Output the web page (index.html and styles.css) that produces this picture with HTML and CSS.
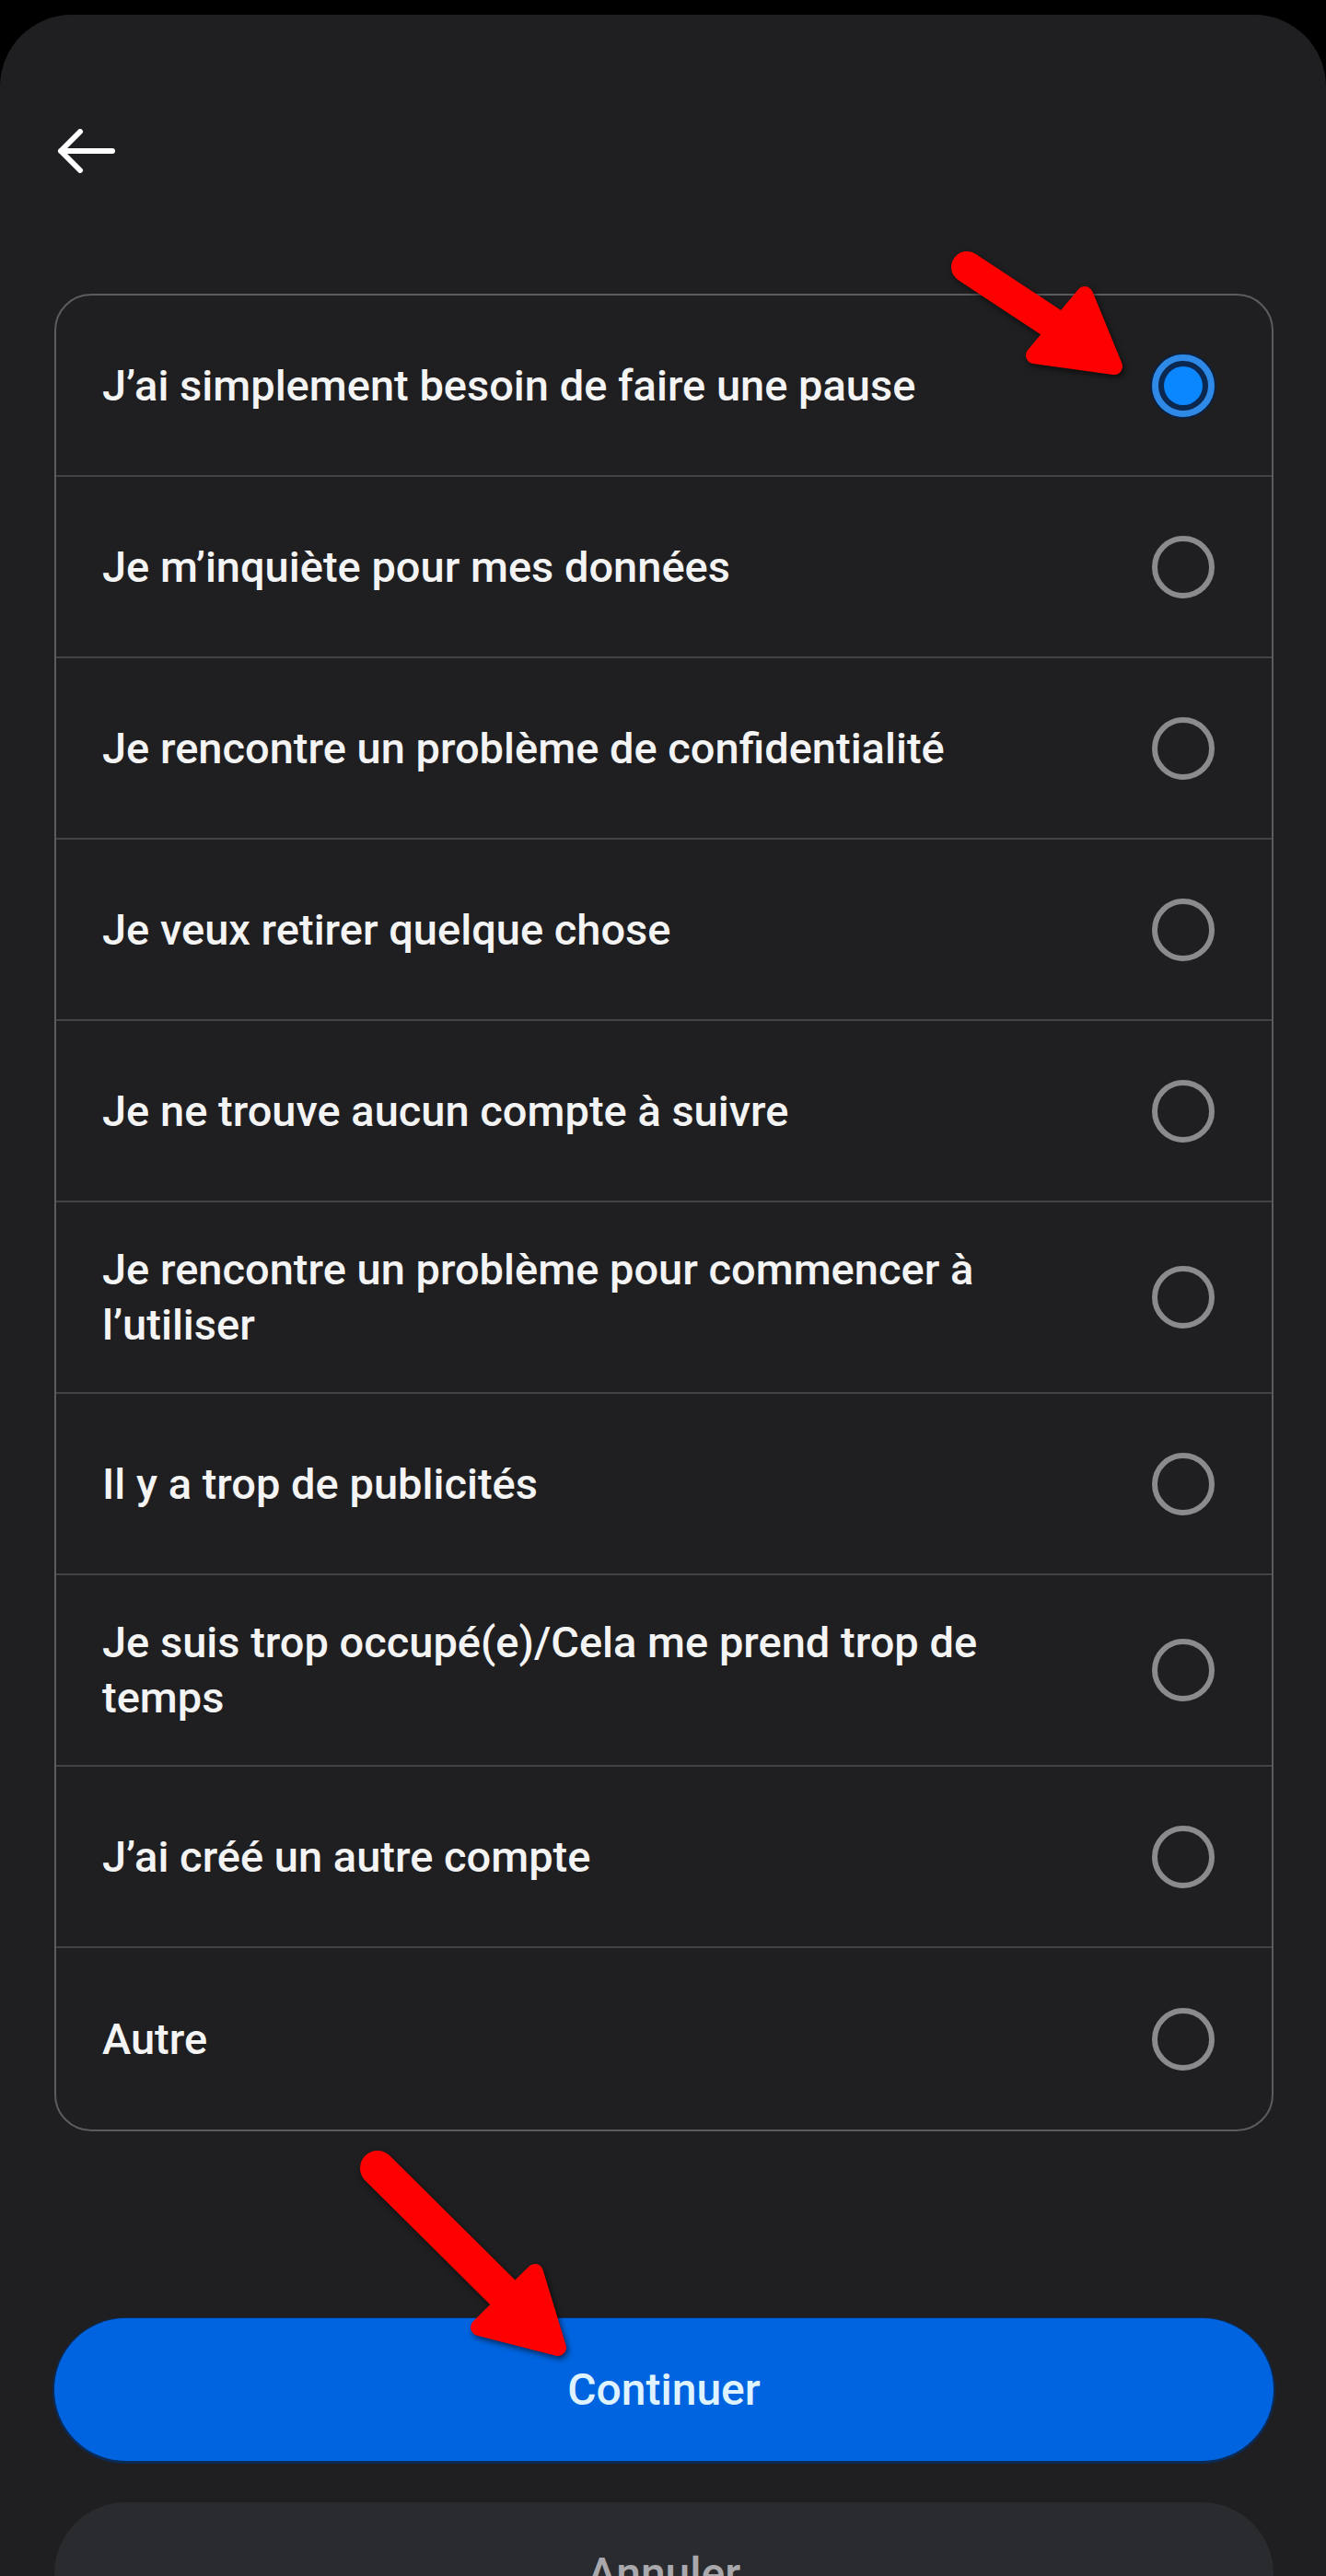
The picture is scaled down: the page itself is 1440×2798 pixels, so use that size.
FILE: index.html
```html
<!DOCTYPE html>
<html lang="fr">
<head>
<meta charset="utf-8">
<title>Raison</title>
<link rel="stylesheet" href="styles.css">
</head>
<body>
<div class="sheet">
  <header class="header">
    <button class="back" aria-label="Retour">
      <svg width="64" height="48" viewBox="0 0 64 48"><path d="M60 24 H4 M25 3 L4 24 L25 45" fill="none" stroke="#ffffff" stroke-width="6" stroke-linecap="round" stroke-linejoin="round"/></svg>
    </button>
  </header>

  <ul class="options">
    <li class="option"><span class="label">J’ai simplement besoin de faire une pause</span><span class="radio on"></span></li>
    <li class="option"><span class="label">Je m’inquiète pour mes données</span><span class="radio"></span></li>
    <li class="option"><span class="label">Je rencontre un problème de confidentialité</span><span class="radio"></span></li>
    <li class="option"><span class="label">Je veux retirer quelque chose</span><span class="radio"></span></li>
    <li class="option"><span class="label">Je ne trouve aucun compte à suivre</span><span class="radio"></span></li>
    <li class="option"><span class="label">Je rencontre un problème pour commencer à l’utiliser</span><span class="radio"></span></li>
    <li class="option"><span class="label">Il y a trop de publicités</span><span class="radio"></span></li>
    <li class="option"><span class="label">Je suis trop occupé(e)/Cela me prend trop de temps</span><span class="radio"></span></li>
    <li class="option"><span class="label">J’ai créé un autre compte</span><span class="radio"></span></li>
    <li class="option"><span class="label">Autre</span><span class="radio"></span></li>
  </ul>

  <div class="actions">
    <button class="btn primary">Continuer</button>
    <button class="btn secondary">Annuler</button>
  </div>
</div>

<svg class="annotations" width="1440" height="2798" viewBox="0 0 1440 2798">
  <g fill="#ff0000" stroke="#ff0000" stroke-linejoin="round" stroke-linecap="round">
    <line x1="1050" y1="290" x2="1150" y2="356" stroke-width="34"/>
    <polygon points="1178,320 1123,386 1210,398" stroke-width="18"/>
    <line x1="410" y1="2355" x2="550" y2="2494" stroke-width="38"/>
    <polygon points="581,2468 520,2528 606,2550" stroke-width="18"/>
  </g>
</svg>
</body>
</html>
```

FILE: styles.css
```css
html, body {
  margin: 0;
  padding: 0;
  background: #000000;
}
body {
  position: relative;
  height: 2798px;
  overflow: hidden;
  font-family: Roboto, "Liberation Sans", sans-serif;
}
.sheet {
  margin-top: 16px;
  background: #1f1f21;
  border-radius: 78px 78px 0 0;
  min-height: 2782px;
  padding: 0 57px 0 59px;
  box-sizing: border-box;
}
.header {
  padding: 124px 0 131px 3px;
  display: flex;
}
.back {
  background: none;
  border: 0;
  padding: 0;
  margin: 0;
  display: block;
  cursor: pointer;
}
.back svg { display: block; }

.options {
  list-style: none;
  margin: 0;
  padding: 0;
  border: 2px solid #5c5c60;
  border-radius: 40px;
  overflow: hidden;
}
.option {
  display: flex;
  align-items: center;
  justify-content: space-between;
  gap: 130px;
  min-height: 197px;
  box-sizing: border-box;
  padding: 43px 62px 43px 50px;
  border-bottom: 2px solid #434347;
}
.option:last-child { border-bottom: 0; }
.label {
  color: #f4f4f5;
  font-size: 47px;
  font-weight: 500;
  line-height: 60px;
  flex: 1;
}
.radio {
  flex: 0 0 auto;
  width: 68px;
  height: 68px;
  box-sizing: border-box;
  border-radius: 50%;
  border: 6px solid #8a8a8f;
}
.radio.on {
  position: relative;
  border: 7px solid #2e8ae6;
  background: #0b2850;
  box-shadow: 0 0 0 2px #0a2142;
}
.radio.on::after {
  content: "";
  position: absolute;
  inset: 6px;
  border-radius: 50%;
  background: #0a86ff;
}

.actions {
  margin-top: 203px;
  display: flex;
  flex-direction: column;
  gap: 45px;
}
.btn {
  height: 155px;
  border: 0;
  border-radius: 78px;
  font-family: Roboto, "Liberation Sans", sans-serif;
  font-size: 48px;
  font-weight: 500;
  width: 100%;
  cursor: pointer;
}
.primary {
  background: #0064e0;
  color: #dff2ff;
  box-shadow: 0 1px 0 2px #0b2a55;
}
.secondary {
  background: #2a2b2f;
  color: #a9a9ad;
}

.annotations {
  position: absolute;
  top: 0;
  left: 0;
  pointer-events: none;
  filter: drop-shadow(2px 3px 3px rgba(0,0,0,0.6));
}
```
